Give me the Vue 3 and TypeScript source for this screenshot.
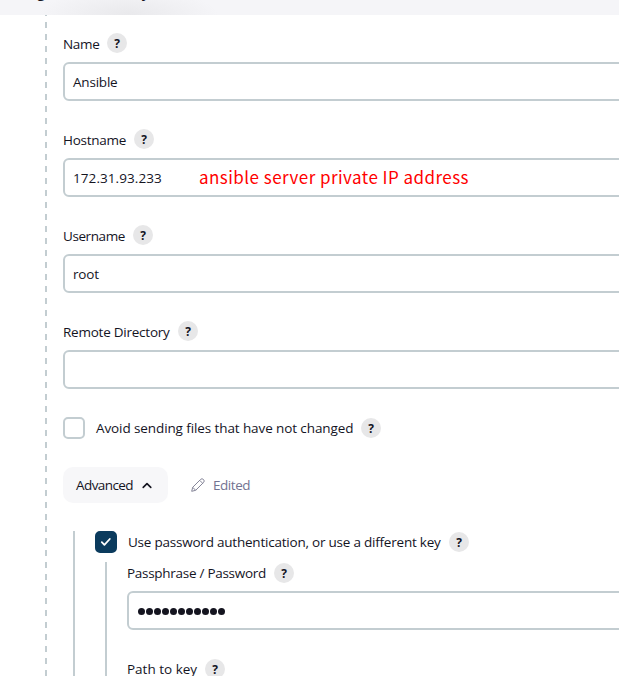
<script setup lang="ts">
import { ref } from 'vue'

interface Field {
  id: string
  label: string
  value: string
  note?: string
}

const fields = ref<Field[]>([
  { id: 'name', label: 'Name', value: 'Ansible' },
  { id: 'host', label: 'Hostname', value: '172.31.93.233', note: 'ansible server private IP address' },
  { id: 'user', label: 'Username', value: 'root' },
  { id: 'dir', label: 'Remote Directory', value: '' },
])
const passwordLength = 11
</script>

<template>
  <div class="page">
    <header class="topbar"><span class="title">Configure</span><span class="title">System</span></header>
    <main class="body">
      <svg class="dash" width="2" height="661"><line x1="1" y1="-5" x2="1" y2="661" /></svg>
      <div class="form">
        <section v-for="f in fields" :key="f.id" class="field">
          <div class="label"><span :class="['t', f.id]">{{ f.label }}</span><b class="help">?</b></div>
          <div class="input"><span :class="['t', 'v-' + f.id]">{{ f.value }}</span><span v-if="f.note" class="note">{{ f.note }}</span></div>
        </section>
        <div class="check">
          <i class="box"></i><span class="t avoid">Avoid sending files that have not changed</span><b class="help">?</b>
        </div>
        <div class="actions">
          <button class="advanced"><span class="t adv">Advanced</span>
            <svg width="10" height="7" viewBox="0 0 10 7"><path d="M1.2 5.4 5 1.6 8.8 5.4" /></svg>
          </button>
          <span class="edited">
            <svg width="14" height="14" viewBox="0 0 14 14"><path d="M.7 13.3 1.7 9.3 9.6 1.4Q11 0 12.5 1.5T12.6 4.4L4.7 12.3ZM8.7 2.3 11.7 5.3M1.7 9.3 4.7 12.3" /></svg>
            <span class="t edt">Edited</span>
          </span>
        </div>
        <div class="nested">
          <div class="check">
            <i class="box on"><svg width="12" height="10" viewBox="0 0 12 10"><path d="M1.8 5.2 4.4 7.8 9.8 2" /></svg></i>
            <span class="t use">Use password authentication, or use a different key</span><b class="help">?</b>
          </div>
          <div class="inner">
            <section class="field">
              <div class="label"><span class="t pass">Passphrase / Password</span><b class="help">?</b></div>
              <div class="input dots"><i v-for="n in passwordLength" :key="n"></i></div>
            </section>
            <section class="field">
              <div class="label"><span class="t path">Path to key</span><b class="help">?</b></div>
              <div class="input"></div>
            </section>
          </div>
        </div>
      </div>
    </main>
  </div>
</template>

<style>
body { margin: 0; background: #fff; }
</style>

<style scoped>
* { box-sizing: border-box; }
.page { width: 100%; height: 676px; overflow: hidden; font: 13.5px/20px "Open Sans", "Noto Sans", sans-serif; color: #14141f; }
.topbar { display: flex; gap: 66px; height: 15px; padding-left: 2px; overflow: hidden; background: radial-gradient(ellipse 90px 24px at 128px 14px, #e9e9ec, #f5f5f8 100%); }
.title { display: block; margin-top: -17.5px; font-size: 14px; font-weight: 600; }
.body { display: flex; height: 661px; padding-left: 45px; }
.dash { flex: none; }
.dash line { stroke: #c3cdd1; stroke-width: 2; stroke-dasharray: 6 6; }
.form { flex: none; width: 700px; padding: 18px 0 0 16px; }
.field { height: 96px; }
.label { display: flex; align-items: center; height: 20px; gap: 8px; }
.t { display: block; flex: none; white-space: nowrap; }
.form > .field .label .t { padding-top: 2px; }
.help { display: flex; flex: none; align-items: center; justify-content: center; width: 20px; height: 20px; padding-top: 1px; border-radius: 50%; background: #e7e7e8; font: 700 12px/20px "Open Sans", sans-serif; }
.input { display: flex; align-items: center; height: 39px; margin-top: 9px; padding-left: 8px; border: 2px solid #c3cdd1; border-radius: 6px; }
.note { margin-left: 37px; padding-bottom: 1px; color: #f00; font: 400 17px/22px "Noto Sans CJK SC", "Open Sans", sans-serif; letter-spacing: .45px; white-space: nowrap; }
.name { width: 36px; letter-spacing: -.3px; }
.host { width: 63px; letter-spacing: -.28px; }
.user { width: 62px; letter-spacing: -.42px; }
.dir { width: 107px; letter-spacing: -.24px; }
.v-name { letter-spacing: -.2px; }
.v-host { width: 89px; letter-spacing: .08px; }
.v-user { letter-spacing: -.2px; }
.check { display: flex; align-items: center; height: 22px; }
.box { display: flex; flex: none; align-items: center; justify-content: center; width: 22px; height: 22px; border: 2px solid #c3cdd1; border-radius: 5px; margin-right: 11px; }
.box.on { background: #0b3b5d; border-color: #0b3b5d; }
.box path { fill: none; stroke: #fff; stroke-width: 1.8; stroke-linecap: round; stroke-linejoin: round; }
.avoid { width: 257px; letter-spacing: -.1px; }
.check .help { margin-left: 8px; }
.actions { display: flex; align-items: center; height: 36px; margin-top: 28px; }
.advanced { display: flex; align-items: center; width: 105px; height: 36px; padding: 0 0 0 13px; border: 0; border-radius: 10px; background: #f7f7f9; color: inherit; font: inherit; }
.adv { width: 57px; margin-right: 9px; letter-spacing: -.6px; }
.advanced path { fill: none; stroke: #14141f; stroke-width: 1.6; stroke-linecap: round; stroke-linejoin: round; }
.edited { display: flex; align-items: center; margin-left: 23px; gap: 8px; color: #737391; }
.edt { letter-spacing: -.45px; }
.edited path { fill: none; stroke: #858598; stroke-width: 1; }
.nested { margin: 28px 0 0 10px; padding-left: 20px; border-left: 2px solid #c3cdd1; height: 170px; }
.use { width: 313px; letter-spacing: -.22px; }
.inner { margin: 9px 0 0 10px; padding: 1px 0 0 20px; border-left: 2px solid #c3cdd1; height: 140px; }
.inner .input { margin-top: 8px; }
.pass { width: 139px; letter-spacing: -.28px; }
.path { width: 70px; }
.dots { padding: 2px 0 0 8.5px; }
.dots i { width: 7px; height: 7px; margin-right: 1px; border-radius: 50%; background: #14141f; }
</style>
